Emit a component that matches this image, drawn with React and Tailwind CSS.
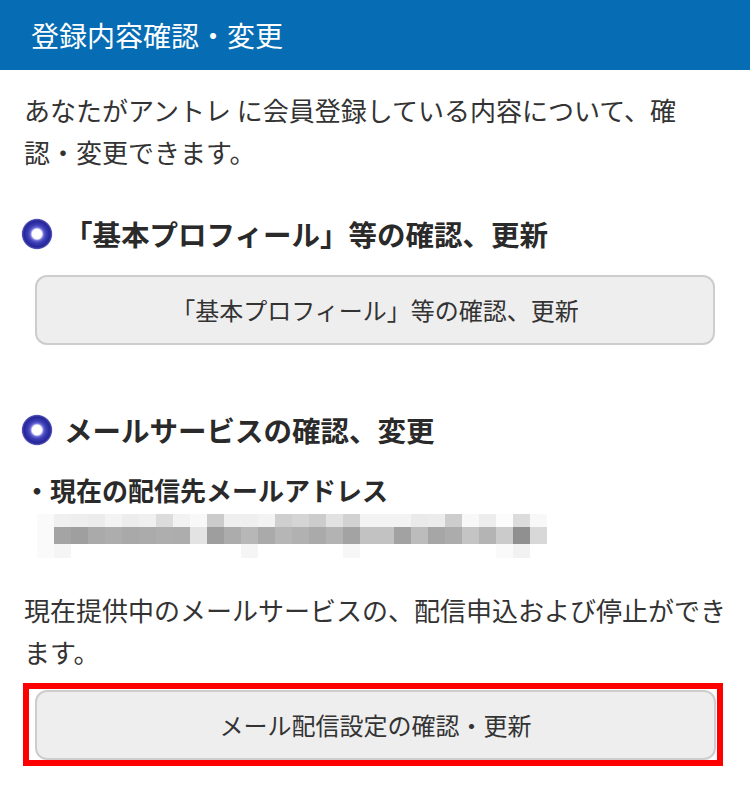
const font = { fontFamily: '"Noto Sans CJK JP", "Noto Sans", sans-serif' };

const mosaicTop = ["#fafafa","#f0f0f0","#eeeeee","#ececec","#f3f3f3","#ededed","#f0f0f0","#dcdcdc","#f2f2f2","#f8f8f8","#cbcbcb","#efefef","#efefef","#f3f3f3","#cfcfcf","#d5d5d5","#cccccc","#e2e2e2","#d2d2d2","#f3f3f3","#f3f3f3","#f3f3f3","#eaeaea","#ececec","#cdcdcd","#f8f8f8","#ededed","#fcfcfc","#dcdcdc","#f8f8f8"];
const mosaicMid = ["#fafafa","#a4a4a4","#9f9f9f","#aaaaaa","#adadad","#a9a9a9","#ababab","#aeaeae","#adadad","#e3e3e3","#9e9e9e","#acacac","#b7b7b7","#aaaaaa","#b6b6b6","#b1b1b1","#aaaaaa","#b3b3b3","#a3a3a3","#c2c2c2","#c2c2c2","#a2a2a2","#bcbcbc","#a6a6a6","#acacac","#c4c4c4","#b4b4b4","#cbcbcb","#909090","#d8d8d8"];
const mosaicBottom = { 0: "#fafafa", 1: "#f5f5f5", 12: "#f5f5f5", 18: "#f7f7f7", 27: "#fafafa", 28: "#f2f2f2" };

function RingIcon() {
  return (
    <svg width="32" height="32" viewBox="0 0 32 32" className="shrink-0 -ml-[3px]">
      <defs>
        <radialGradient id="ring" cx="50%" cy="50%" r="50%">
          <stop offset="0" stopColor="#ffffff" />
          <stop offset="0.3" stopColor="#ffffff" />
          <stop offset="0.42" stopColor="#6a6ad6" />
          <stop offset="0.56" stopColor="#3e3eb6" />
          <stop offset="0.82" stopColor="#25259a" />
          <stop offset="0.92" stopColor="#3434a4" stopOpacity="0.85" />
          <stop offset="1" stopColor="#ffffff" stopOpacity="0" />
        </radialGradient>
      </defs>
      <circle cx="16" cy="16" r="16" fill="url(#ring)" />
    </svg>
  );
}

function SectionTitle({ children, className = "" }) {
  return (
    <div className={`flex items-center gap-[11px] h-10 ${className}`}>
      <RingIcon />
      <h2 className="text-[28.5px] leading-10 font-bold text-[#2a2a2a]">{children}</h2>
    </div>
  );
}

function GrayButton({ children, className = "" }) {
  return (
    <button className={`h-[70px] flex items-center justify-center bg-[#eeeeee] border-2 border-[#cdcdcd] rounded-xl text-[24px] text-[#333333] ${className}`} style={font}>
      {children}
    </button>
  );
}

function Mosaic() {
  return (
    <svg width="510" height="44" className="ml-[13px] mt-1 block">
      {mosaicTop.map((c, i) => (
        <rect key={"t" + i} x={i * 17} y="0" width="17" height="13" fill={c} />
      ))}
      {mosaicMid.map((c, i) => (
        <rect key={"m" + i} x={i * 17} y="13" width="17" height="17" fill={c} />
      ))}
      {Object.entries(mosaicBottom).map(([i, c]) => (
        <rect key={"b" + i} x={i * 17} y="30" width="17" height="14" fill={c} />
      ))}
    </svg>
  );
}

export default function App() {
  return (
    <div className="w-[750px] h-[812px] bg-white text-[#333333] overflow-hidden" style={font}>
      <header className="h-[70px] bg-[#066db5] flex items-center px-[31px]">
        <h1 className="text-[28px] text-white leading-none">登録内容確認・変更</h1>
      </header>

      <main className="px-6">
        <p className="mt-[19px] text-[26px] leading-[42px]">
          あなたがアントレ に会員登録している内容について、確<br />認・変更できます。
        </p>

        <SectionTitle className="mt-[41px]">「基本プロフィール」等の確認、更新</SectionTitle>
        <GrayButton className="mt-[21px] mx-[11px] w-[680px]">「基本プロフィール」等の確認、更新</GrayButton>

        <SectionTitle className="mt-[65px]">メールサービスの確認、変更</SectionTitle>
        <p className="mt-5 text-[26px] leading-10 font-bold text-[#2a2a2a]">・現在の配信先メールアドレス</p>
        <Mosaic />

        <p className="mt-[31px] text-[26px] leading-[42px]">
          現在提供中のメールサービスの、配信申込および停止ができ<br />ます。
        </p>

        <div className="mt-[10px] -ml-px w-[700px] border-[6px] border-[#ff0000] pl-[6px] pr-px pt-px">
          <GrayButton className="w-full">メール配信設定の確認・更新</GrayButton>
        </div>
      </main>
    </div>
  );
}
